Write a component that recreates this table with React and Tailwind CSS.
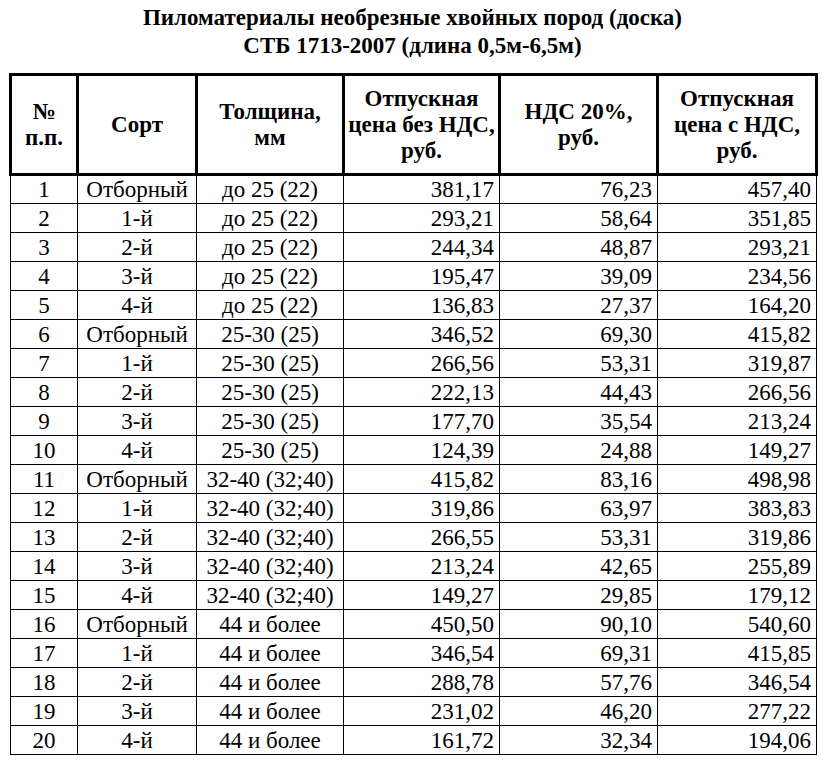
import React from 'react';

const rows = [
  ['1', 'Отборный', 'до 25 (22)', '381,17', '76,23', '457,40'],
  ['2', '1-й', 'до 25 (22)', '293,21', '58,64', '351,85'],
  ['3', '2-й', 'до 25 (22)', '244,34', '48,87', '293,21'],
  ['4', '3-й', 'до 25 (22)', '195,47', '39,09', '234,56'],
  ['5', '4-й', 'до 25 (22)', '136,83', '27,37', '164,20'],
  ['6', 'Отборный', '25-30 (25)', '346,52', '69,30', '415,82'],
  ['7', '1-й', '25-30 (25)', '266,56', '53,31', '319,87'],
  ['8', '2-й', '25-30 (25)', '222,13', '44,43', '266,56'],
  ['9', '3-й', '25-30 (25)', '177,70', '35,54', '213,24'],
  ['10', '4-й', '25-30 (25)', '124,39', '24,88', '149,27'],
  ['11', 'Отборный', '32-40 (32;40)', '415,82', '83,16', '498,98'],
  ['12', '1-й', '32-40 (32;40)', '319,86', '63,97', '383,83'],
  ['13', '2-й', '32-40 (32;40)', '266,55', '53,31', '319,86'],
  ['14', '3-й', '32-40 (32;40)', '213,24', '42,65', '255,89'],
  ['15', '4-й', '32-40 (32;40)', '149,27', '29,85', '179,12'],
  ['16', 'Отборный', '44 и более', '450,50', '90,10', '540,60'],
  ['17', '1-й', '44 и более', '346,54', '69,31', '415,85'],
  ['18', '2-й', '44 и более', '288,78', '57,76', '346,54'],
  ['19', '3-й', '44 и более', '231,02', '46,20', '277,22'],
  ['20', '4-й', '44 и более', '161,72', '32,34', '194,06'],
];

const serif = "[font-family:'Liberation_Serif','Times_New_Roman',serif]";
const th = 'border-[3px] border-black font-bold text-center align-middle leading-[26px] px-0';
const td = 'border border-black h-[29px] p-0 leading-[27px] whitespace-nowrap';

export default function App() {
  return (
    <div className={`w-[825px] h-[765px] bg-white text-black ${serif}`}>
      <div className="pt-[4px] text-center font-bold text-[23px] leading-[28px]">
        <div>Пиломатериалы необрезные хвойных пород (доска)</div>
        <div>СТБ 1713-2007 (длина 0,5м-6,5м)</div>
      </div>

      <table className={`ml-[9px] mt-[13px] border-collapse table-fixed w-[806px] text-[23px] ${serif}`}>
        <colgroup>
          <col className="w-[67px]" />
          <col className="w-[119px]" />
          <col className="w-[147px]" />
          <col className="w-[156px]" />
          <col className="w-[158px]" />
          <col className="w-[159px]" />
        </colgroup>
        <thead>
          <tr className="h-[100px]">
            <th className={th}>№<br />п.п.</th>
            <th className={th}>Сорт</th>
            <th className={th}>Толщина,<br />мм</th>
            <th className={th}>Отпускная<br />цена без НДС,<br />руб.</th>
            <th className={th}>НДС 20%,<br />руб.</th>
            <th className={th}>Отпускная<br />цена с НДС,<br />руб.</th>
          </tr>
        </thead>
        <tbody>
          {rows.map((r) => (
            <tr key={r[0]}>
              <td className={`${td} text-center`}>{r[0]}</td>
              <td className={`${td} text-center`}>{r[1]}</td>
              <td className={`${td} text-center`}>{r[2]}</td>
              <td className={`${td} text-right pr-[5px]`}>{r[3]}</td>
              <td className={`${td} text-right pr-[5px]`}>{r[4]}</td>
              <td className={`${td} text-right pr-[5px]`}>{r[5]}</td>
            </tr>
          ))}
        </tbody>
      </table>
    </div>
  );
}
